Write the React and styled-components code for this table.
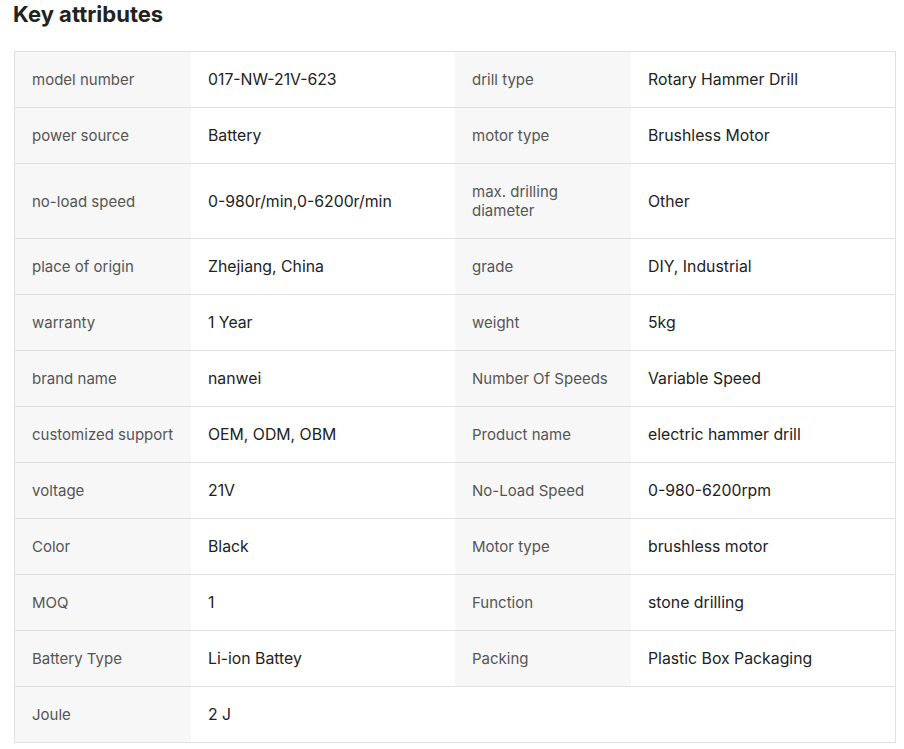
import React from "react";
import styled, { createGlobalStyle } from "styled-components";

const Global = createGlobalStyle`
  html, body { margin: 0; padding: 0; background: #fff; }
  body { font-family: Inter, "Noto Sans", Roboto, sans-serif; }
`;

const Page = styled.div`
  padding: 0 8px 0 14px;
`;

const Title = styled.h2`
  margin: 0 0 0 -1px;
  font-size: 22px;
  line-height: 28px;
  font-weight: 700;
  color: #222;
  height: 51px;
`;

const Table = styled.div`
  width: 882px;
  box-sizing: border-box;
  border: 1px solid #e0e0e0;
  border-bottom: none;
`;

const Row = styled.div`
  display: grid;
  grid-template-columns: 176px 264px 176px 264px;
  border-bottom: 1px solid #e0e0e0;
`;

const Cell = styled.div`
  padding: 18px 17px;
  font-size: ${(p) => (p.$label ? "15px" : "15.8px")};
  line-height: 19px;
  display: flex;
  align-items: center;
  background: ${(p) => (p.$label ? "#f7f7f7" : "#fff")};
  color: ${(p) => (p.$label ? "#555" : "#222")};
`;

const rows = [
  ["model number", "017-NW-21V-623", "drill type", "Rotary Hammer Drill"],
  ["power source", "Battery", "motor type", "Brushless Motor"],
  ["no-load speed", "0-980r/min,0-6200r/min", "max. drilling diameter", "Other"],
  ["place of origin", "Zhejiang, China", "grade", "DIY, Industrial"],
  ["warranty", "1 Year", "weight", "5kg"],
  ["brand name", "nanwei", "Number Of Speeds", "Variable Speed"],
  ["customized support", "OEM, ODM, OBM", "Product name", "electric hammer drill"],
  ["voltage", "21V", "No-Load Speed", "0-980-6200rpm"],
  ["Color", "Black", "Motor type", "brushless motor"],
  ["MOQ", "1", "Function", "stone drilling"],
  ["Battery Type", "Li-ion Battey", "Packing", "Plastic Box Packaging"],
  ["Joule", "2 J"],
];

export default function App() {
  return (
    <>
      <Global />
      <Page>
        <Title>Key attributes</Title>
        <Table>
          {rows.map((r, i) => (
            <Row key={i}>
              <Cell $label>{r[0]}</Cell>
              <Cell>{r[1]}</Cell>
              {r[2] !== undefined ? (
                <>
                  <Cell $label>{r[2]}</Cell>
                  <Cell>{r[3]}</Cell>
                </>
              ) : (
                <>
                  <Cell />
                  <Cell />
                </>
              )}
            </Row>
          ))}
        </Table>
      </Page>
    </>
  );
}
